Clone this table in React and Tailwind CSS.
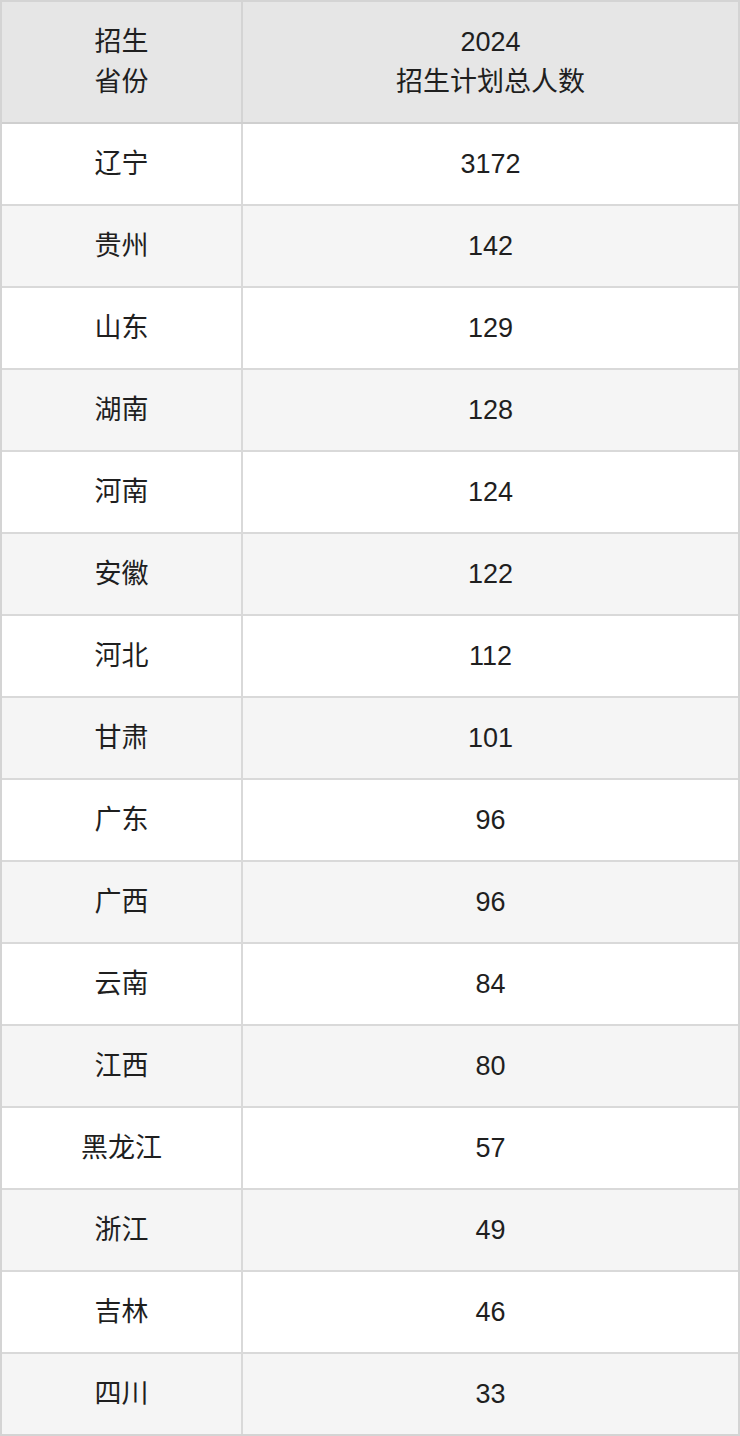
const rows = [
  ['辽宁', '3172'],
  ['贵州', '142'],
  ['山东', '129'],
  ['湖南', '128'],
  ['河南', '124'],
  ['安徽', '122'],
  ['河北', '112'],
  ['甘肃', '101'],
  ['广东', '96'],
  ['广西', '96'],
  ['云南', '84'],
  ['江西', '80'],
  ['黑龙江', '57'],
  ['浙江', '49'],
  ['吉林', '46'],
  ['四川', '33'],
];

export default function App() {
  return (
    <div
      className="w-[740px] bg-white text-[27px] leading-[40px] text-[#1f1f1f]"
      style={{ fontFamily: '"Liberation Sans", Arial, "Noto Sans CJK SC", sans-serif' }}
    >
      <div className="border-2 border-[#d4d4d4]">
        {/* Header */}
        <div className="flex h-[122px] bg-[#e6e6e6] border-b-2 border-[#cfcfcf]">
          <div className="w-[241px] border-r-2 border-[#d4d4d4] flex items-center justify-center text-center">
            <div>
              招生
              <br />
              省份
            </div>
          </div>
          <div className="flex-1 flex items-center justify-center text-center">
            <div>
              2024
              <br />
              招生计划总人数
            </div>
          </div>
        </div>

        {/* Rows */}
        {rows.map(([province, count], i) => (
          <div
            key={province}
            className={`flex ${i < rows.length - 1 ? 'h-[82px] border-b-2' : 'h-[80px]'} border-[#d9d9d9] ${
              i % 2 === 1 ? 'bg-[#f5f5f5]' : 'bg-white'
            }`}
          >
            <div className="w-[241px] border-r-2 border-[#d9d9d9] flex items-center justify-center">
              {province}
            </div>
            <div className="flex-1 flex items-center justify-center">{count}</div>
          </div>
        ))}
      </div>
    </div>
  );
}
